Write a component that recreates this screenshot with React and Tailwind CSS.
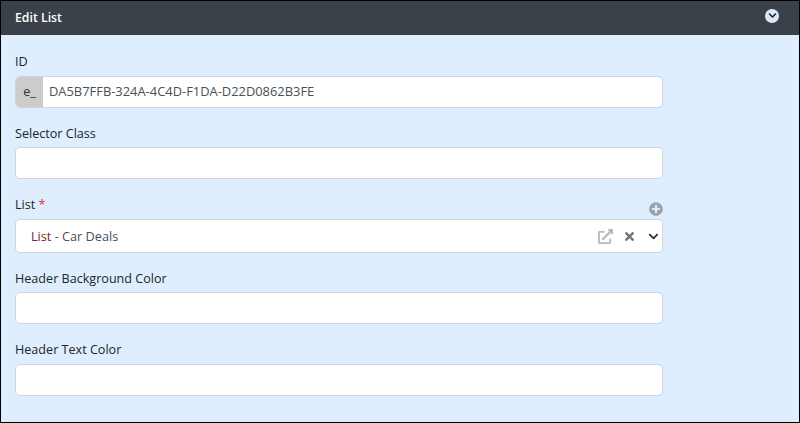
import { FaChevronDown, FaExternalLinkAlt, FaPlusCircle, FaTimes } from "react-icons/fa";

const Label = ({ children }) => (
  <div className="relative h-[19px] text-[12.6px] leading-[21px] text-[#212529]">{children}</div>
);

const Field = ({ label, gap }) => (
  <div className="pt-[15px]">
    <Label>{label}</Label>
    <input className={`${gap} block h-[32px] w-full rounded-[5px] border border-[#ced4da] bg-white`} />
  </div>
);

export default function App() {
  return (
    <div className="h-[423px] w-[800px] overflow-hidden border border-black bg-[#dfeeff] font-['Open_Sans',sans-serif]">
      <div className="flex h-[34px] items-center justify-between bg-[#3a4149] pl-[14px] pr-[20px]">
        <span className="text-[12.3px] font-semibold text-white">Edit List</span>
        <span className="mb-[5px] flex h-[14px] w-[14px] items-center justify-center rounded-full bg-[#dbe8f6]">
          <FaChevronDown size={9} className="text-[#121a24]" />
        </span>
      </div>

      <div className="w-[662px] pl-[14px]">
        <div className="pt-[16px]">
          <Label>ID</Label>
          <div className="mt-[6px] flex h-[32px] overflow-hidden rounded-[5px] border border-[#ced4da] bg-white">
            <span className="flex w-[27px] items-center justify-center bg-[#cccccc] text-[12.6px] text-[#333]">e_</span>
            <span className="flex items-center pl-[6px] text-[12.9px] text-[#495057]">DA5B7FFB-324A-4C4D-F1DA-D22D0862B3FE</span>
          </div>
        </div>

        <Field label="Selector Class" gap="mt-[5px]" />

        <div className="pt-[15px]">
          <Label>
            List <span className="text-[#dc3545]">*</span>
            <FaPlusCircle size={14} className="absolute right-0 top-[8px] text-[#9aa3ab]" />
          </Label>
          <div className="mt-[6px] flex h-[34px] items-center rounded-[5px] border border-[#ced4da] bg-white pl-[15px] pr-[3px]">
            <span className="flex-1 pt-[1px] text-[12.7px] text-[#495057]">
              <span className="text-[#7a1f2b]">List</span> - Car Deals
            </span>
            <FaExternalLinkAlt size={15} className="text-[#b4bac0]" />
            <FaTimes size={13} className="ml-[10px] text-[#6c757d]" />
            <FaChevronDown size={11} className="ml-[12px] text-[#24344a]" />
          </div>
        </div>

        <Field label="Header Background Color" gap="mt-[5px]" />
        <Field label="Header Text Color" gap="mt-[6px]" />
      </div>
    </div>
  );
}
